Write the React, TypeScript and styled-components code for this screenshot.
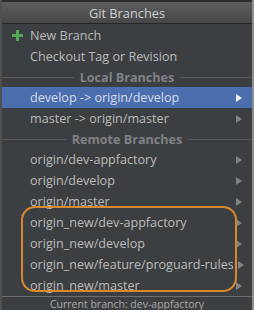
import React from "react";
import styled, { createGlobalStyle } from "styled-components";

const Global = createGlobalStyle`
  html, body { margin: 0; padding: 0; background: #3c3f41; }
  body { font-family: "Open Sans", "Noto Sans", sans-serif; }
`;

const Popup = styled.div`
  position: relative;
  width: 254px;
  height: 310px;
  box-sizing: border-box;
  display: flex;
  flex-direction: column;
  background: #3c3f41;
  border-left: 2px solid #4e5052;
  border-right: 2px solid #8d8f91;
  overflow: hidden;
`;

const TitleBar = styled.div`
  height: 21px;
  flex: none;
  display: flex;
  align-items: center;
  justify-content: center;
  border-top: 2px solid #2c2c2c;
  border-bottom: 1px solid #262626;
  background: linear-gradient(#5b5d5f, #45474a);
  color: #cfcfcf;
  font-size: 12.8px;
`;

const List = styled.div`
  display: flex;
  flex-direction: column;
  flex: 1;
  padding-top: 1px;
`;

const Item = styled.div<{ $selected?: boolean }>`
  height: 21px;
  flex: none;
  display: flex;
  align-items: center;
  padding: 0 10px 0 28px;
  position: relative;
  background: ${(p) => (p.$selected ? "#4b6eaf" : "transparent")};
  color: ${(p) => (p.$selected ? "#d6dcea" : "#bbbbbb")};
  font-size: 12.6px;
  white-space: nowrap;
`;

const Label = styled.span`
  flex: 1;
`;

const PlusIcon = styled.span`
  position: absolute;
  left: 10px;
  top: 5px;
  width: 11px;
  height: 11px;
  &::before, &::after {
    content: "";
    position: absolute;
    background: #54a857;
  }
  &::before { left: 4px; top: 0; width: 3px; height: 11px; }
  &::after { left: 0; top: 4px; width: 11px; height: 3px; }
`;

const Arrow = styled.span<{ $selected?: boolean }>`
  width: 0;
  height: 0;
  border-top: 4px solid transparent;
  border-bottom: 4px solid transparent;
  border-left: 6px solid ${(p) => (p.$selected ? "#f0f0f0" : "#808386")};
  margin-left: 4px;
`;

const Section = styled.div`
  height: 20px;
  flex: none;
  display: flex;
  align-items: center;
  gap: 6px;
  color: #7f8184;
  font-weight: bold;
  font-size: 12.6px;
  &::before, &::after {
    content: "";
    flex: 1;
    height: 1px;
    background: #56585a;
  }
`;

const Footer = styled.div`
  flex: none;
  height: 13px;
  border-top: 1px solid #6a6c6e;
  display: flex;
  justify-content: center;
  align-items: center;
  color: #a9abad;
  font-size: 10.5px;
  line-height: 12px;
`;

const Annotation = styled.div`
  position: absolute;
  left: 19px;
  top: 206px;
  width: 212px;
  height: 82px;
  border: 2px solid #d8892c;
  border-radius: 14px;
  pointer-events: none;
`;

type Row = { label: string; selected?: boolean };

const local: Row[] = [
  { label: "develop -> origin/develop", selected: true },
  { label: "master -> origin/master" },
];

const remote: Row[] = [
  { label: "origin/dev-appfactory" },
  { label: "origin/develop" },
  { label: "origin/master" },
  { label: "origin_new/dev-appfactory" },
  { label: "origin_new/develop" },
  { label: "origin_new/feature/proguard-rules" },
  { label: "origin_new/master" },
];

const BranchRow = ({ label, selected }: Row) => (
  <Item $selected={selected}>
    <Label>{label}</Label>
    <Arrow $selected={selected} />
  </Item>
);

export default function App() {
  return (
    <>
      <Global />
      <Popup>
        <TitleBar>Git Branches</TitleBar>
        <List>
          <Item>
            <PlusIcon />
            <Label>New Branch</Label>
          </Item>
          <Item>
            <Label>Checkout Tag or Revision</Label>
          </Item>
          <Section>Local Branches</Section>
          {local.map((r) => (
            <BranchRow key={r.label} {...r} />
          ))}
          <Section>Remote Branches</Section>
          {remote.map((r) => (
            <BranchRow key={r.label} {...r} />
          ))}
        </List>
        <Footer>Current branch: dev-appfactory</Footer>
        <Annotation />
      </Popup>
    </>
  );
}
